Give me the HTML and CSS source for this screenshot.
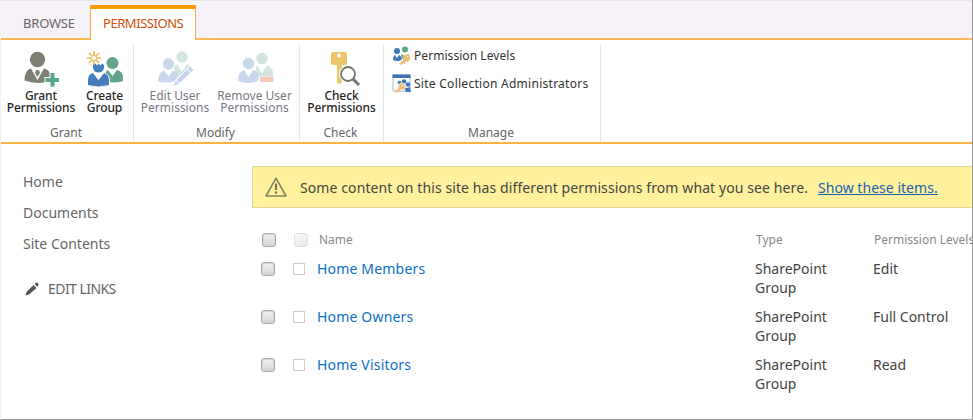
FILE: index.html
```html
<!DOCTYPE html>
<html lang="en">
<head>
<meta charset="utf-8">
<title>Permissions</title>
<link rel="stylesheet" href="styles.css">
</head>
<body>
<div class="frame">
  <nav class="tabs">
    <a class="tab browse"><span>BROWSE</span></a>
    <a class="tab active"><span>PERMISSIONS</span></a>
    <div class="tab-rest"></div>
  </nav>
  <section class="ribbon">
    <div class="group grant">
      <div class="tools">
        <button class="tool w-grant">
          <svg width="36" height="36" viewBox="0 0 36 36">
            <g fill="#7f8075"><circle cx="14.500" cy="8.500" r="7.700"/><path d="M8 17.500 L14.500 29 L21 17.500 Q27 19 28 25 V30 Q14 34 1.500 29.500 Q1.500 19 8 17.500Z"/></g>
            <path d="M9.500 17.500h10l-5 9z" fill="#fff"/><path d="M13 19h3l1 3-2.500 4-2.500-4z" fill="#7f8075"/>
            <path d="M26.500 21h6v5h5v6h-5v5h-6v-5h-5v-6h5z" fill="#fff"/>
            <path d="M27.500 22h4v5h4.500v4h-4.500v4.500h-4V31H22.500v-4h5z" fill="#5ba58a"/>
          </svg>
          <span>Grant<br>Permissions</span>
        </button>
        <button class="tool w-create">
          <svg width="38" height="36" viewBox="0 0 38 36">
            <g fill="#62a58c"><circle cx="26.500" cy="12" r="6"/><path d="M22 19l4.500 6 4.500-6q6 1 6 8v3q-9 3-18 0v-4q0-6 3-7z"/></g>
            <path d="M7 21.500l5.500 7 5.500-7q5.500 2 5.500 8v5q-11 3-22 0v-5q0-6.500 5.500-8z" fill="#447fbc" stroke="#fff"/>
            <path d="M7 14l2.500-1.500 1.500 2 1.500-2 2 2 1.500-2 2 1.500v3q-1 4.500-5.500 4.500T7 17z" fill="#447fbc"/>
            <g stroke="#efbd5b" stroke-width="1.700"><path d="M8 0v14M1 7h14M3 2l10 10M13 2L3 12"/></g>
            <circle cx="8" cy="7" r="2.500" fill="#fff" stroke="#efbd5b"/>
          </svg>
          <span>Create<br>Group</span>
        </button>
      </div>
      <div class="caption">Grant</div>
    </div>
    <div class="group modify">
      <div class="tools">
        <button class="tool disabled w-edit">
          <svg width="36" height="36" viewBox="0 0 36 36">
            <g fill="#d3e5dc"><circle cx="25" cy="6" r="5.700"/><path d="M20 13l5 8 5-8q3 1 5 4l-12 8-5-4q-2-6 2-8z"/></g>
            <g fill="#c9d8ed"><circle cx="11.500" cy="13" r="5.700"/><path d="M7 19.500l4.500 6 4.500-6q6 1 6 5l-5 6q-8 2-16 0 0-9 6-11z"/></g>
            <path d="M33 15l4 4-15 14-6 3 2-6z" fill="#c5d5eb" stroke="#fff"/>
            <path d="M30 18l4 4M19 29l3 3" stroke="#fff"/>
          </svg>
          <span>Edit User<br>Permissions</span>
        </button>
        <button class="tool disabled w-remove">
          <svg width="36" height="36" viewBox="0 0 36 36">
            <g fill="#d3e5dc"><circle cx="25" cy="7.500" r="5.700"/><path d="M20 14.500l5 8 5-8q6 2 6 8v3H22v-2l-2-2q-2-5 0-7z"/></g>
            <g fill="#c9d8ed"><circle cx="11.500" cy="12.500" r="5.700"/><path d="M7 19l4.500 7 4.500-7q6 1 6 6l-1 5q-10 4-20 0 0-9 6-11z"/></g>
            <path d="M23 26h13.500v5H23z" fill="#f5c8bb"/>
          </svg>
          <span>Remove User<br>Permissions</span>
        </button>
      </div>
      <div class="caption">Modify</div>
    </div>
    <div class="group check">
      <div class="tools">
        <button class="tool w-check">
          <svg width="36" height="36" viewBox="0 0 36 36">
            <path fill-rule="evenodd" d="M9 1h12q2 0 2 2v9q0 2-2 2h-3v17q-3 4-5 0V14H9q-2 0-2-2V3q0-2 2-2zm6 1.500a2 2 0 100 4 2 2 0 100-4z" fill="#edc56d"/>
            <circle cx="24" cy="23" r="7" fill="#fff" stroke="#fff" stroke-width="4"/>
            <circle cx="24" cy="23" r="7" fill="#fff" stroke="#74756c" stroke-width="1.800"/>
            <path d="M29 28l6 6" stroke="#74756c" stroke-width="3"/>
          </svg>
          <span>Check<br>Permissions</span>
        </button>
      </div>
      <div class="caption">Check</div>
    </div>
    <div class="group manage">
      <div class="links">
        <button class="link-tool">
          <svg width="19" height="19" viewBox="0 0 19 19">
            <g fill="#5ba58a"><circle cx="13" cy="3.500" r="3"/><path d="M9 8l4 2 4-2 1 5h-8z"/></g>
            <g fill="#3d78b8"><circle cx="5" cy="5" r="3"/><path d="M3 9l2 3 2-3q3 1 3 5-5 2-9 0 0-4 2-5z"/></g>
            <path d="M14 12l-5 5" stroke="#fff" stroke-width="4"/>
            <circle cx="14.500" cy="12" r="3.700" fill="#efbd77"/><path d="M13 13.500l-5 5M11 15.500l2 2" stroke="#efbd77" stroke-width="2"/>
            <circle cx="15.500" cy="11" r=".8" fill="#fff"/>
          </svg>
          <span class="t-levels">Permission Levels</span>
        </button>
        <button class="link-tool">
          <svg width="19" height="19" viewBox="0 0 19 19">
            <path d="M1 1h17v16H1z" fill="#fff" stroke="#a6b8d3"/><path d="M.5.500h18V4H.500z" fill="#3d70b0"/>
            <g fill="#3d78b8"><circle cx="12" cy="7.500" r="2.300"/><circle cx="7.500" cy="8.500" r="1.800"/><circle cx="16" cy="10.500" r="2.300"/><path d="M12 13l3 1 3-1 1 5h-5z"/></g>
            <circle cx="10" cy="12.500" r="3.500" fill="#efbd77" stroke="#fff" stroke-width=".6"/><path d="M8 14l-4.500 4.500M6 15.500l2 2" stroke="#efbd77" stroke-width="2"/>
            <circle cx="11" cy="11.500" r=".8" fill="#fff"/>
          </svg>
          <span class="t-admins">Site Collection Administrators</span>
        </button>
      </div>
      <div class="caption">Manage</div>
    </div>
  </section>
  <div class="body">
    <aside class="side">
      <a>Home</a><a>Documents</a><a>Site Contents</a>
      <a class="edit">
        <svg width="14" height="14" viewBox="0 0 14 14"><path d="M8.500 3l3 3L4 12.500.500 13.500 1.500 10zM9.500 2L11 .700q1-.5 2 .5t.3 2L12.500 5z" fill="#555"/></svg>
        <span>EDIT LINKS</span>
      </a>
    </aside>
    <main class="main">
      <div class="notice">
        <svg width="22" height="20" viewBox="0 0 22 20"><path d="M11 1.200L21 19H1z" fill="none" stroke="#858263" stroke-width="1.600" stroke-linejoin="round"/><path d="M11 6.500v6.500M11 14.500v2.200" stroke="#77745a" stroke-width="2.200"/></svg>
        <span class="msg">Some content on this site has different permissions from what you see here.</span>
        <a>Show these items.</a>
      </div>
      <div class="grid">
        <div class="row head">
          <i class="box"></i><i class="box pale"></i><span class="name">Name</span><span class="type">Type</span><span class="level">Permission Levels</span>
        </div>
        <div class="row">
          <i class="box"></i><i class="pic"></i><a class="name">Home Members</a><span class="type">SharePoint<br>Group</span><span class="level">Edit</span>
        </div>
        <div class="row">
          <i class="box"></i><i class="pic"></i><a class="name">Home Owners</a><span class="type">SharePoint<br>Group</span><span class="level">Full Control</span>
        </div>
        <div class="row">
          <i class="box"></i><i class="pic"></i><a class="name">Home Visitors</a><span class="type">SharePoint<br>Group</span><span class="level">Read</span>
        </div>
      </div>
    </main>
  </div>
</div>
</body>
</html>
```
FILE: styles.css
```css
* { box-sizing: border-box; }
body { margin: 0; background: #fff; font-family: "Noto Sans", "Open Sans", sans-serif; font-size: 13px; color: #444; }
.frame { width: 973px; height: 420px; overflow: hidden; border-right: 1px solid #999; border-bottom: 1px solid #999; border-left: 1px solid #f2f2f2; white-space: nowrap; }
button { border: 0; background: none; padding: 0; margin: 0; font: inherit; color: inherit; }

.tabs { display: flex; height: 40px; background: #f6f2f7; border-top: 1px solid #e9e6ea; }
.tab { height: 39px; padding-top: 12px; line-height: 20px; font-size: 13px; }
.browse { width: 89px; padding-left: 22px; border-bottom: 2px solid #fdbb55; color: #666; letter-spacing: -0.2px; }
.active { width: 106px; height: 35px; margin-top: 4px; padding: 4px 0 0 12px; background: #fff; border: 1px solid #fbb03a; border-top: 4px solid #ff9a00; border-bottom: 0; color: #cf4e0c; letter-spacing: -0.45px; }
.tab-rest { flex: 1; height: 39px; border-bottom: 2px solid #fdbb55; }

.ribbon { display: flex; height: 104px; border-bottom: 2px solid #fbb545; padding-top: 4px; }
.group { display: flex; flex-direction: column; border-right: 1px solid #e6e6ee; }
.grant { width: 133px; }
.modify { width: 166px; }
.check { width: 84px; }
.manage { width: 217px; }
.tools { display: flex; height: 80px; padding-top: 7px; }
.tool { display: flex; flex-direction: column; align-items: center; color: #262626; font-size: 12px; line-height: 12px; font-weight: 500; letter-spacing: -0.1px; }
.tool svg { display: block; flex: none; overflow: visible; }
.tool span { margin-top: 3px; }
.disabled { color: #777a85; font-weight: 400; letter-spacing: 0; }
.w-grant { width: 80px; }
.w-create { width: 47px; }
.w-edit { width: 82px; }
.w-remove { width: 77px; }
.w-check { width: 83px; }
.caption { padding: 1px 2px 0 0; text-align: center; font-size: 12px; line-height: 19px; color: #666; }
.links { display: flex; flex-direction: column; height: 80px; padding: 2px 0 0 8px; gap: 9px; }
.link-tool { display: flex; align-items: center; gap: 3px; height: 19px; font-size: 12px; color: #333; }
.t-levels { letter-spacing: 0.06px; }
.t-admins { letter-spacing: 0.27px; }

.body { display: flex; height: 275px; }
.side { display: flex; flex-direction: column; width: 251px; padding: 22px 0 0 22px; font-size: 14px; line-height: 31px; color: #666; }
.edit { display: flex; align-items: center; gap: 9px; margin-top: 14px; padding-left: 2px; letter-spacing: -0.55px; }
.main { flex: 1; padding-top: 22px; min-width: 0; }
.notice { display: flex; align-items: center; height: 42px; padding: 0 0 0 12px; background: #fff19d; border: 1px solid #dcd896; border-right: 0; font-size: 14px; }
.msg { margin-left: 13px; letter-spacing: 0.1px; }
.notice a { margin-left: 10px; color: #1b62b0; text-decoration: underline; letter-spacing: 0.03px; }
.grid { padding: 22px 0 0 9px; }
.row { display: grid; grid-template-columns: 32px 24px 438px 118px 150px; height: 48px; font-size: 14px; line-height: 19px; }
.head { height: 29px; font-size: 12px; line-height: 20px; color: #888; padding-left: 1px; }
.head .name { padding-left: 1px; }
.name { color: #0b70c7; letter-spacing: 0.18px; }
.head .name { color: #888; letter-spacing: 0; }
.box { width: 14px; height: 14px; margin-top: 3px; border: 1px solid #aaa; border-radius: 3px; background: linear-gradient(#f0f0f0, #d5d5d5); box-shadow: inset 0 0 0 1px #d5d5d5; }
.pale { border-color: #ddd; background: linear-gradient(135deg, #fafafa, #e8e8e8); box-shadow: none; }
.pic { width: 12px; height: 12px; margin: 4px 0 0 0; border: 1px solid #ccc; background: #fff; }
```
